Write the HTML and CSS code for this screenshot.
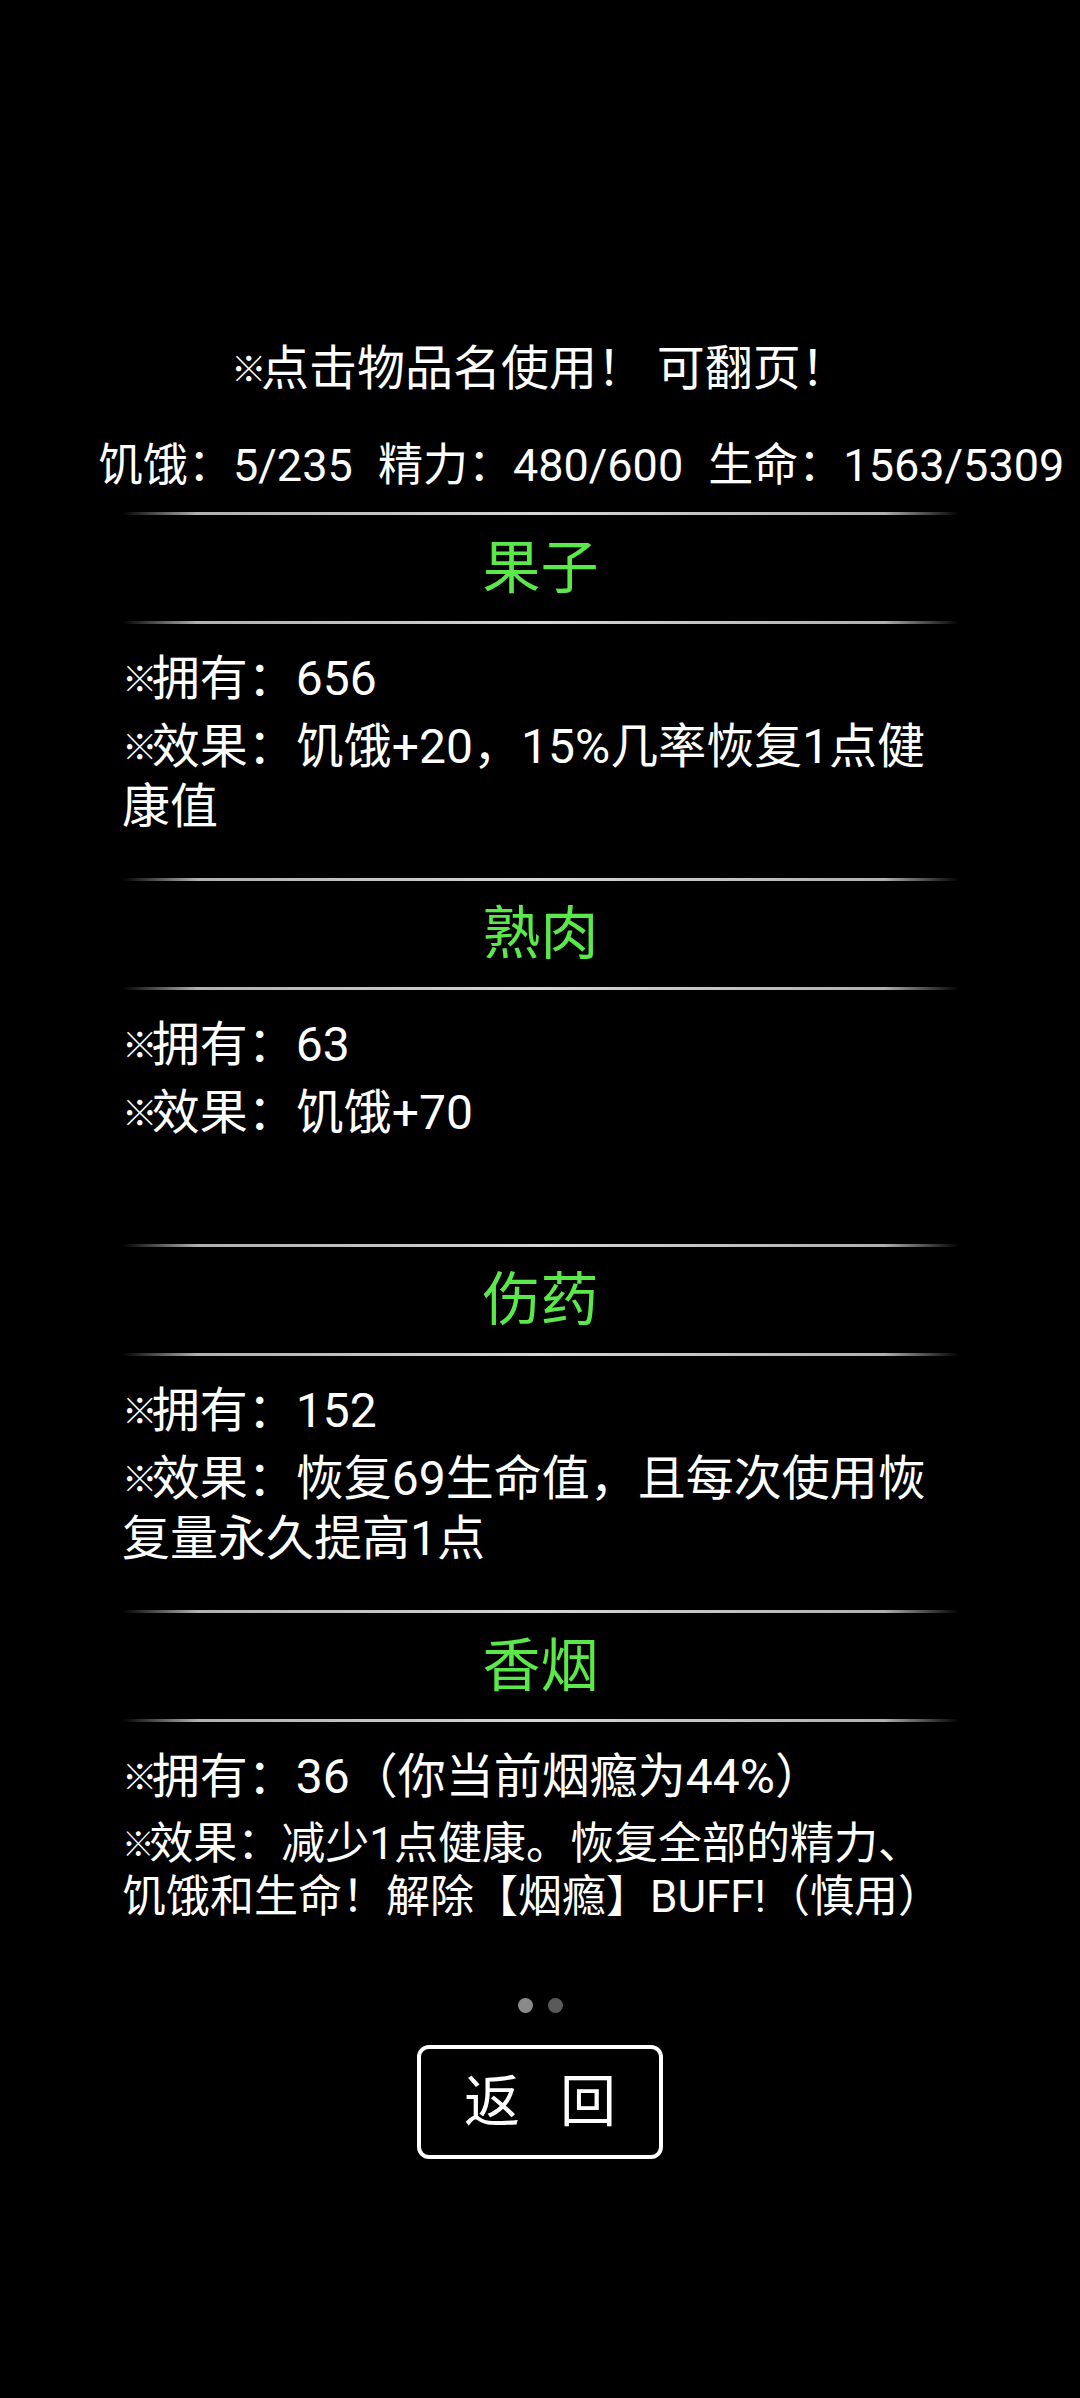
FILE: index.html
```html
<!DOCTYPE html>
<html lang="zh-CN">
<head>
<meta charset="utf-8">
<title>物品</title>
<link rel="stylesheet" href="styles.css">
</head>
<body>
<main class="page">
  <p class="title"><span class="mk">※</span>点击物品名使用！ 可翻页！</p>
  <p class="stats">饥饿：5/235 精力：480/600 生命：1563/5309</p>

  <section class="list">
    <article class="item">
      <div class="rule"></div>
      <h2 class="name">果子</h2>
      <div class="rule"></div>
      <div class="body">
        <p class="row"><span class="mk">※</span>拥有：656</p>
        <p class="row"><span class="mk">※</span>效果：饥饿+20，15%几率恢复1点健<br>康值</p>
      </div>
    </article>

    <article class="item">
      <div class="rule"></div>
      <h2 class="name">熟肉</h2>
      <div class="rule"></div>
      <div class="body">
        <p class="row"><span class="mk">※</span>拥有：63</p>
        <p class="row"><span class="mk">※</span>效果：饥饿+70</p>
      </div>
    </article>

    <article class="item">
      <div class="rule"></div>
      <h2 class="name">伤药</h2>
      <div class="rule"></div>
      <div class="body">
        <p class="row"><span class="mk">※</span>拥有：152</p>
        <p class="row"><span class="mk">※</span>效果：恢复69生命值，且每次使用恢<br>复量永久提高1点</p>
      </div>
    </article>

    <article class="item">
      <div class="rule"></div>
      <h2 class="name">香烟</h2>
      <div class="rule"></div>
      <div class="body">
        <p class="row"><span class="mk">※</span>拥有：36（你当前烟瘾为44%）</p>
        <p class="row small"><span class="mk">※</span>效果：减少1点健康。恢复全部的精力、<br>饥饿和生命！解除【烟瘾】BUFF!（慎用）</p>
      </div>
    </article>
  </section>

  <div class="pager">
    <span class="dot on"></span>
    <span class="dot"></span>
  </div>

  <div class="actions">
    <button class="back" type="button">返 回</button>
  </div>
</main>
</body>
</html>
```

FILE: styles.css
```css
* {
  box-sizing: border-box;
}

html, body {
  margin: 0;
  padding: 0;
  background: #000;
}

body {
  width: 1080px;
  min-height: 2398px;
  color: #fff;
  font-family: Roboto, "Noto Sans CJK SC", sans-serif;
}

.page {
  padding-top: 339px;
  display: flex;
  flex-direction: column;
}

p, h2 {
  margin: 0;
}

/* reference mark: smaller glyph with a narrow advance */
.mk {
  font-size: 0.74em;
  letter-spacing: -0.16em;
  vertical-align: 0.09em;
}

.title {
  font-size: 48px;
  line-height: 60px;
  text-align: center;
  white-space: nowrap;
}

.stats {
  margin-top: 36px;
  padding-left: 98px;
  font-size: 45px;
  line-height: 60px;
  white-space: nowrap;
  word-spacing: 14px;
}

.list {
  margin-top: 16px;
  margin-left: 122px;
  width: 837px;
  display: flex;
  flex-direction: column;
}

.item {
  display: flex;
  flex-direction: column;
  height: 366px;
}

.rule {
  height: 3px;
  background: linear-gradient(90deg,
    rgba(255, 255, 255, 0) 0%,
    rgba(195, 195, 195, 0.9) 9%,
    #d6d6d6 50%,
    rgba(195, 195, 195, 0.9) 91%,
    rgba(255, 255, 255, 0) 100%);
}

.name {
  height: 106px;
  display: flex;
  align-items: center;
  justify-content: center;
  font-size: 58px;
  line-height: 60px;
  font-weight: 400;
  color: #5ae84b;
}

.body {
  flex: 1;
  padding-top: 25px;
  display: flex;
  flex-direction: column;
  gap: 7px;
}

.row {
  font-size: 48px;
  line-height: 60px;
  white-space: nowrap;
}

.row.small {
  margin-top: 3px;
  font-size: 44px;
  line-height: 52px;
}

.pager {
  margin-top: 22px;
  display: flex;
  justify-content: center;
  gap: 15px;
}

.dot {
  width: 15px;
  height: 15px;
  border-radius: 50%;
  background: #5a5a5a;
}

.dot.on {
  background: #8a8a8a;
}

.actions {
  margin-top: 32px;
  display: flex;
  justify-content: center;
}

.back {
  width: 246px;
  height: 114px;
  margin: 0;
  padding: 0 0 0 13px;
  border: 4px solid #fff;
  border-radius: 12px;
  background: #000;
  color: #fff;
  font-family: Roboto, "Noto Sans CJK SC", sans-serif;
  font-size: 56px;
  letter-spacing: 13px;
  line-height: 1;
}
```
